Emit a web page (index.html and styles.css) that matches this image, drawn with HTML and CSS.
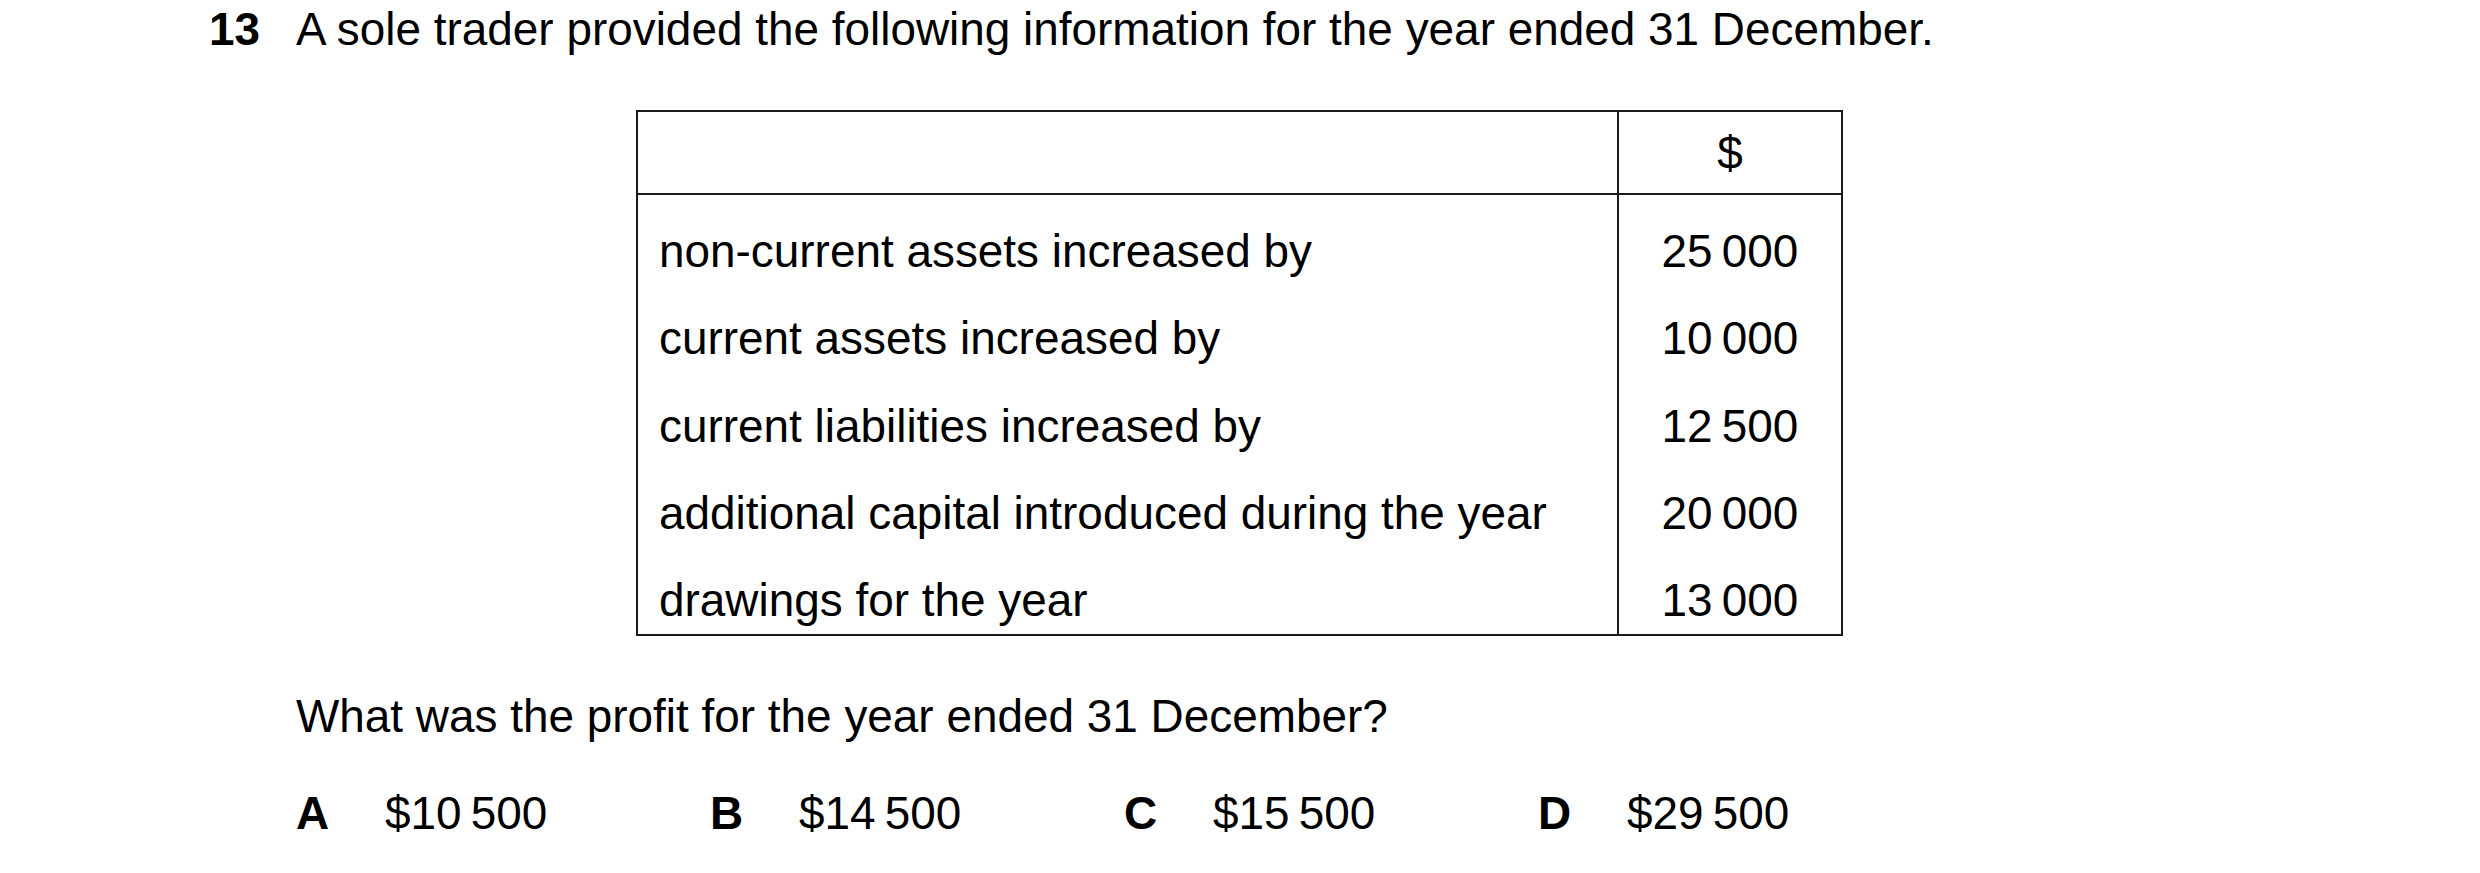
FILE: index.html
```html
<!DOCTYPE html>
<html lang="en">
<head>
<meta charset="utf-8">
<title>Question 13</title>
<link rel="stylesheet" href="styles.css">
</head>
<body>
<div class="question">
  <div class="stem">
    <span class="qnum">13</span>
    <span class="qtext">A sole trader provided the following information for the year ended 31 December.</span>
  </div>
  <table class="data">
    <thead>
      <tr><th class="label"></th><th class="amount">$</th></tr>
    </thead>
    <tbody>
      <tr><td class="label">non-current assets increased by</td><td class="amount">25&thinsp;000</td></tr>
      <tr><td class="label">current assets increased by</td><td class="amount">10&thinsp;000</td></tr>
      <tr><td class="label">current liabilities increased by</td><td class="amount">12&thinsp;500</td></tr>
      <tr><td class="label">additional capital introduced during the year</td><td class="amount">20&thinsp;000</td></tr>
      <tr><td class="label">drawings for the year</td><td class="amount">13&thinsp;000</td></tr>
    </tbody>
  </table>
  <p class="prompt">What was the profit for the year ended 31 December?</p>
  <div class="options">
    <div class="option"><span class="letter">A</span><span class="value">$10&thinsp;500</span></div>
    <div class="option"><span class="letter">B</span><span class="value">$14&thinsp;500</span></div>
    <div class="option"><span class="letter">C</span><span class="value">$15&thinsp;500</span></div>
    <div class="option"><span class="letter">D</span><span class="value">$29&thinsp;500</span></div>
  </div>
</div>
</body>
</html>
```

FILE: styles.css
```css
html, body {
  margin: 0;
  padding: 0;
  background: #ffffff;
}
body {
  font-family: "Liberation Sans", Arial, sans-serif;
  font-size: 45.9px;
  color: #000000;
}
.question {
  padding-left: 209px;
  padding-top: 4px;
}
.stem {
  display: flex;
  line-height: 50px;
}
.qnum {
  font-weight: bold;
  width: 87px;
  flex: none;
}
.data {
  margin-top: 56px;
  margin-left: 427px;
  border-collapse: collapse;
  width: 1207px;
}
.data th, .data td {
  border-left: 2px solid #1a1a1a;
  border-right: 2px solid #1a1a1a;
  padding: 0;
  font-weight: normal;
}
.data thead th {
  height: 81px;
  border-top: 2px solid #1a1a1a;
  border-bottom: 2px solid #1a1a1a;
  text-align: center;
  vertical-align: middle;
  line-height: 50px;
}
.data td {
  line-height: 50px;
  padding-top: 28px;
  padding-bottom: 9.25px;
}
.data tbody tr:first-child td {
  padding-top: 31px;
}
.data tbody tr:last-child td {
  border-bottom: 2px solid #1a1a1a;
}
.data .label {
  text-align: left;
  padding-left: 21px;
  width: 958px;
}
.data .amount {
  text-align: center;
}
.prompt {
  margin: 55px 0 0 87px;
  line-height: 50px;
}
.options {
  display: grid;
  grid-template-columns: repeat(4, 414px);
  margin-top: 47px;
  margin-left: 87px;
  line-height: 50px;
}
.option {
  display: flex;
}
.letter {
  font-weight: bold;
  width: 89px;
  flex: none;
}
```
